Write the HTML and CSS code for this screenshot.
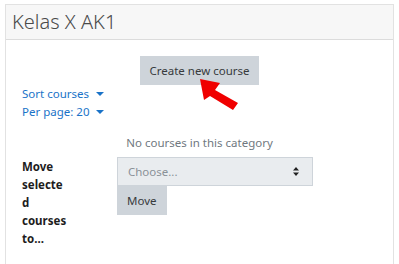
FILE: index.html
```html
<!DOCTYPE html>
<html lang="en">
<head>
    <meta charset="UTF-8">
    <title>Kelas X AK1</title>
    <link rel="stylesheet" href="styles.css">
</head>
<body>

<div class="card">
    <div class="card-header">
        <h3>Kelas X AK1</h3>
    </div>
    <div class="card-body">
        <div class="create-row">
            <button class="btn">Create new course</button>
            <svg class="pointer" width="44" height="36" viewBox="0 0 44 36">
                <polygon points="1,1 21,5 16,12 39,25 34,32 11,18 5,22" fill="#f00000"/>
            </svg>
        </div>
        <div class="sort-links">
            <a href="#">Sort courses <span class="caret"></span></a>
            <a href="#">Per page: 20 <span class="caret"></span></a>
        </div>
        <p class="empty">No courses in this category</p>
        <div class="move-form">
            <label class="move-label" for="movecourses">Move selected courses to...</label>
            <div class="move-controls">
                <div class="select">
                    <span>Choose...</span>
                    <svg width="8" height="11" viewBox="0 0 8 11"><path d="M4 1 L7 4.5 H1 Z M4 10 L7 6.5 H1 Z" fill="#222"/></svg>
                </div>
                <button class="btn btn-move">Move</button>
            </div>
        </div>
    </div>
</div>

</body>
</html>
```

FILE: styles.css
```css
/* Reset */
* {
    margin: 0;
    padding: 0;
    box-sizing: border-box;
}
body {
    font-family: 'Noto Sans', 'Open Sans', sans-serif;
    font-size: 11.5px;
    color: #373a3c;
    background: #fff;
    padding: 4px 0 0 5px;
}
/* Card */
.card {
    width: 389px;
    height: 280px;
    border: 1px solid #e2e2e2;
}
.card-header {
    height: 35px;
    background: #f7f7f7;
    border-bottom: 1px solid #dcdcdc;
    padding: 0 6px;
}
.card-header h3 {
    font-size: 20px;
    font-weight: 300;
    color: #4a4a4a;
    line-height: 34px;
}
.card-body {
    padding: 16px 0 0 16px;
}
/* Create button */
.create-row {
    position: relative;
    display: flex;
    justify-content: center;
    padding-right: 16px;
}
.btn {
    background: #ced4da;
    color: #373a3c;
    border: none;
    font-family: inherit;
    font-size: 11.5px;
    height: 29px;
    padding: 0 9px;
}
.pointer {
    position: absolute;
    left: 177px;
    top: 22px;
}
/* Sort links */
.sort-links {
    display: flex;
    flex-direction: column;
    align-items: flex-start;
}
.sort-links a {
    color: #1a73c8;
    text-decoration: none;
    line-height: 18px;
}
.caret {
    display: inline-block;
    margin-left: 4px;
    vertical-align: 2px;
    border-top: 4px solid #1a73c8;
    border-left: 4px solid transparent;
    border-right: 4px solid transparent;
}
.empty {
    color: #707880;
    text-align: center;
    line-height: 18px;
    margin-top: 13px;
    padding-right: 16px;
}
/* Move form */
.move-form {
    display: flex;
    margin-top: 5px;
}
.move-label {
    width: 46px;
    font-weight: bold;
    color: #1d1d1d;
    line-height: 18px;
    overflow-wrap: anywhere;
    margin-right: 49px;
    padding-top: 1px;
}
.move-controls {
    display: flex;
    flex-direction: column;
    align-items: flex-start;
}
.select {
    width: 196px;
    height: 29px;
    background: #e9ecef;
    border: 1px solid #ced4da;
    display: flex;
    align-items: center;
    justify-content: space-between;
    padding: 0 12px 0 10px;
    color: #8a9198;
}
.btn-move {
    padding: 0 10px;
}
```
